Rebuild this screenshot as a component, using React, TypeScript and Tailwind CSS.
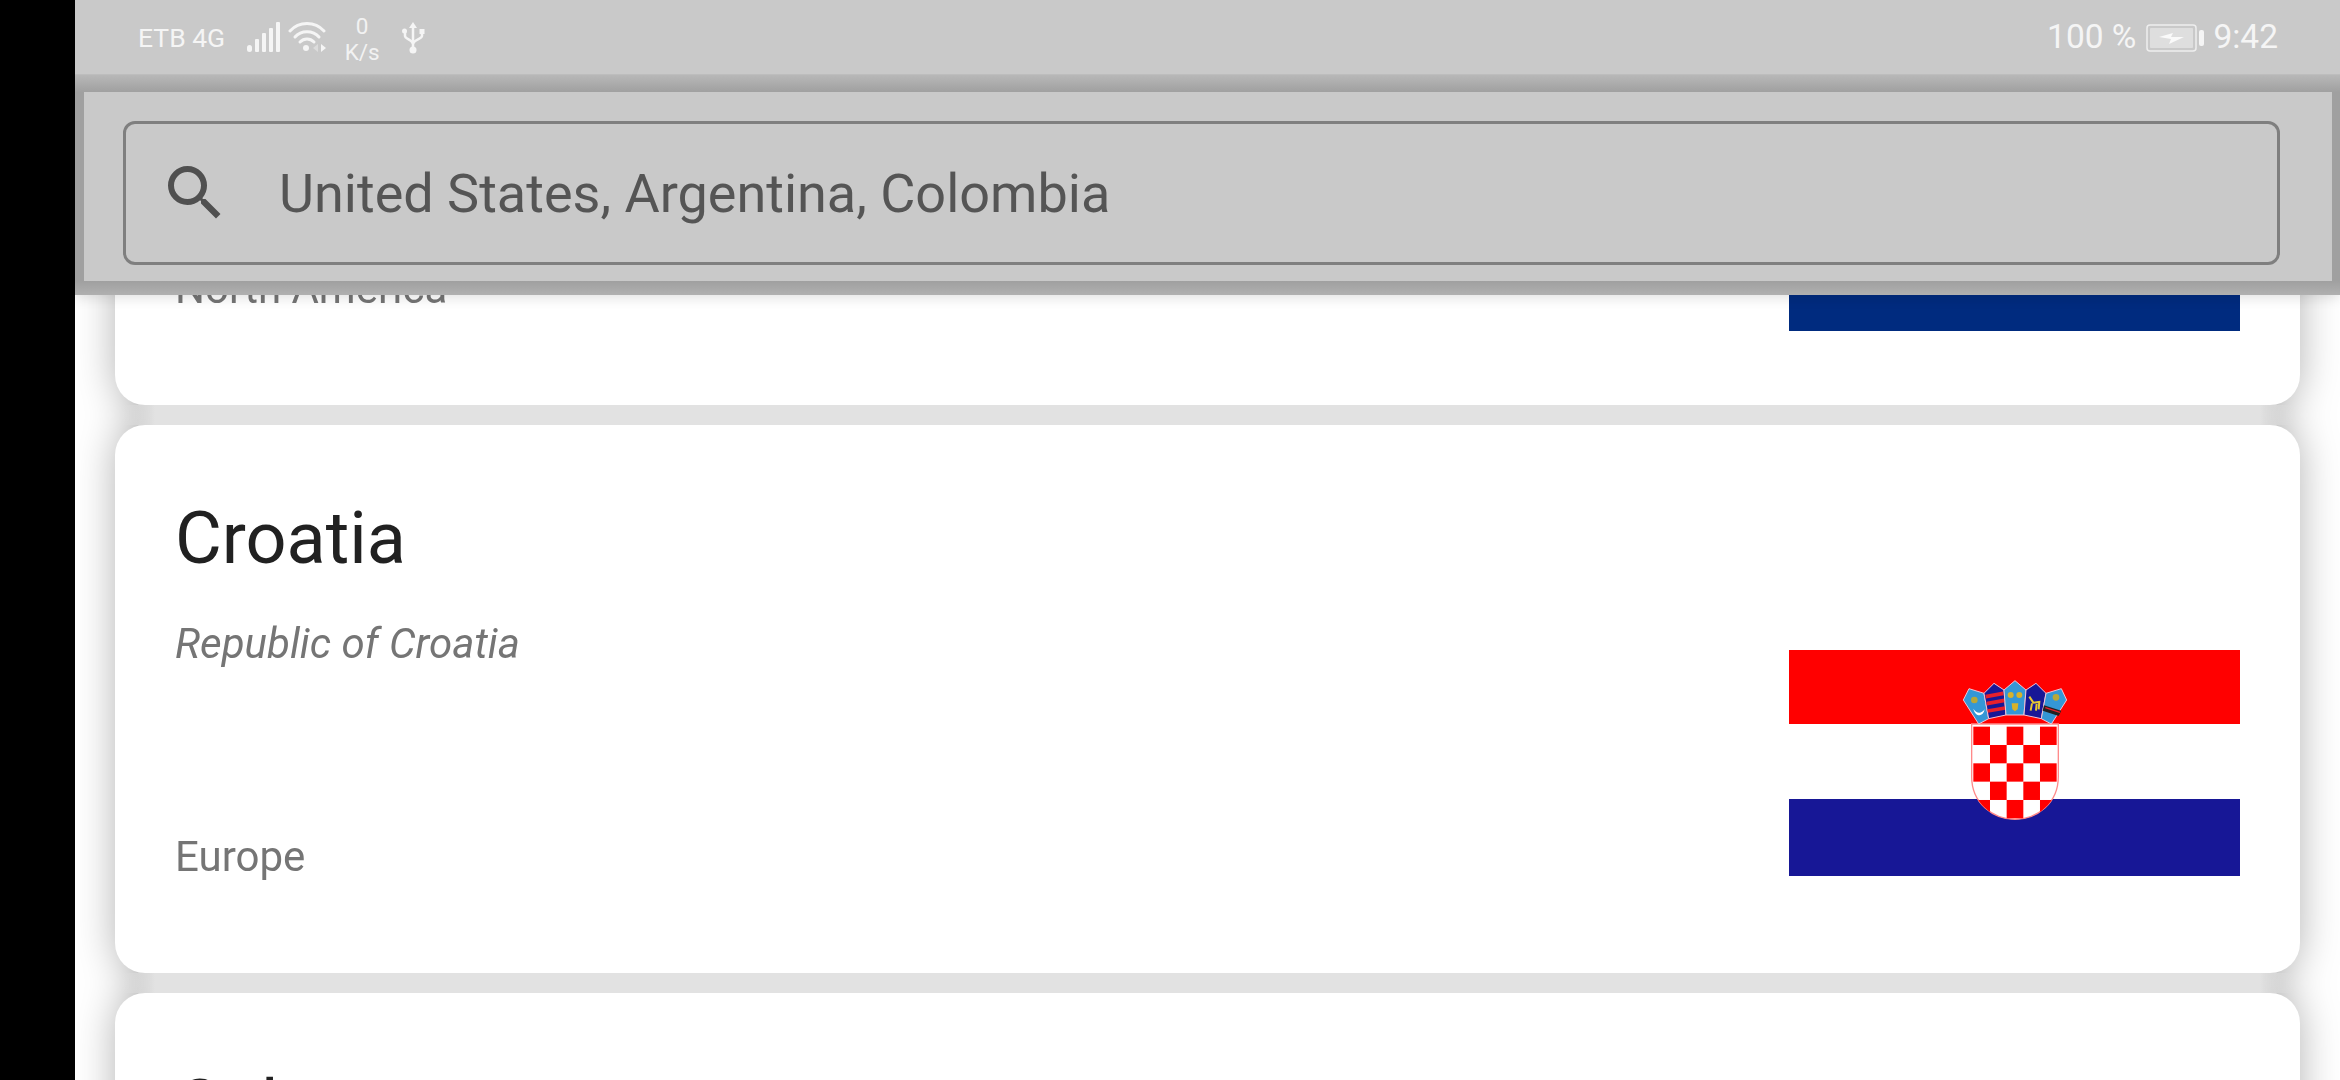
import { Fragment } from "react";
import { MdSearch } from "react-icons/md";

type Country = {
  name: string;
  official: string;
  region: string;
  flag: "costa-rica" | "croatia" | "cuba";
};

const countries: Country[] = [
  { name: "Costa Rica", official: "Republic of Costa Rica", region: "North America", flag: "costa-rica" },
  { name: "Croatia", official: "Republic of Croatia", region: "Europe", flag: "croatia" },
  { name: "Cuba", official: "Republic of Cuba", region: "North America", flag: "cuba" },
];

const checks = [
  [0, 0], [2, 0], [4, 0],
  [1, 1], [3, 1],
  [0, 2], [2, 2], [4, 2],
  [1, 3], [3, 3],
  [0, 4], [2, 4], [4, 4],
];

const shieldPath = "M155 252 L415 252 L415 410 C415 490 350 538 285 538 C220 538 155 490 155 410 Z";

// Coordinates of the crest are in 3x units, scaled down by the group transform.
function CroatiaFlag() {
  return (
    <svg viewBox="0 0 451 226" className="block w-[451px] h-[226px]">
      <rect width="451" height="74" fill="#ff0000" />
      <rect y="74" width="451" height="76" fill="#ffffff" />
      <rect y="149" width="451" height="77" fill="#171796" />
      <g transform="translate(131 -10) scale(0.3333)">
        <clipPath id="shield">
          <path d={shieldPath} />
        </clipPath>
        <path d={shieldPath} fill="#fff" stroke="#ff8a8a" strokeWidth="4" />
        <g clipPath="url(#shield)">
          {checks.map(([c, r]) => (
            <rect key={`${c}-${r}`} x={160 + c * 50} y={260 + r * 55} width="50" height="55" fill="#ff0000" />
          ))}
        </g>
        <path d="M130 180 L147 146 L192 160 L206 236 L176 252 Z" fill="#3497d6" stroke="#f2c4d4" strokeWidth="3" />
        <path d="M192 160 L222 130 L252 150 L258 225 L206 236 Z" fill="#171796" stroke="#f2c4d4" strokeWidth="3" />
        <path d="M197 170 L250 160 M200 191 L254 181 M203 213 L256 204" stroke="#e8202a" strokeWidth="11" />
        <path d="M252 150 L285 122 L318 150 L312 225 L258 225 Z" fill="#3497d6" stroke="#f2c4d4" strokeWidth="3" />
        <circle cx="272" cy="165" r="9" fill="#d8b22a" />
        <circle cx="298" cy="165" r="9" fill="#d8b22a" />
        <path d="M275 190 L295 190 L293 208 L285 214 L277 208 Z" fill="#d8b22a" />
        <path d="M318 150 L348 130 L378 160 L364 236 L312 225 Z" fill="#171796" stroke="#f2c4d4" strokeWidth="3" />
        <path d="M328 170 L340 188 L358 186 L356 208 M336 190 L332 212 M350 192 L348 212" stroke="#e8c832" strokeWidth="6" fill="none" />
        <path d="M378 160 L424 146 L440 180 L394 252 L364 236 Z" fill="#3497d6" stroke="#f2c4d4" strokeWidth="3" />
        <circle cx="408" cy="172" r="10" fill="#b8a838" />
        <path d="M372 196 L424 212 L416 228 L368 212 Z" fill="#222" />
        <path d="M376 203 L420 217" stroke="#e8202a" strokeWidth="4" />
        <path d="M160 206 C170 222 184 222 194 208 C190 232 166 232 160 206 Z" fill="#fff" />
        <circle cx="163" cy="180" r="10" fill="#b8a838" />
      </g>
    </svg>
  );
}

function CostaRicaFlag() {
  return (
    <div className="flex flex-col w-[451px] h-[271px]">
      <div className="h-[45px] bg-[#002b7f]" />
      <div className="h-[45px] bg-white" />
      <div className="h-[91px] bg-[#ce1126]" />
      <div className="h-[45px] bg-white" />
      <div className="h-[45px] bg-[#002b7f]" />
    </div>
  );
}

function CubaFlag() {
  return (
    <div className="flex flex-col w-[451px] h-[226px]">
      <div className="flex-1 bg-[#002a8f]" />
      <div className="flex-1 bg-white" />
      <div className="flex-1 bg-[#002a8f]" />
      <div className="flex-1 bg-white" />
      <div className="flex-1 bg-[#002a8f]" />
    </div>
  );
}

function Flag({ kind }: { kind: Country["flag"] }) {
  if (kind === "croatia") return <CroatiaFlag />;
  if (kind === "costa-rica") return <CostaRicaFlag />;
  return <CubaFlag />;
}

function CountryCard({ country }: { country: Country }) {
  return (
    <article className="flex flex-col h-[548px] shrink-0 rounded-[30px] bg-white pl-[60px] pr-[60px] pt-[61px]">
      <h2 className="h-[105px] text-[72px] leading-[105px] text-[#212121]">{country.name}</h2>
      <div className="flex h-[344px] items-center justify-between">
        <div className="flex h-full flex-col pt-[29px]">
          <p className="text-[42px] leading-[48px] italic text-[#757575]">{country.official}</p>
          <p className="mt-[165px] text-[42px] leading-[48px] text-[#757575]">{country.region}</p>
        </div>
        <Flag kind={country.flag} />
      </div>
    </article>
  );
}

function StatusIcons() {
  return (
    <>
      <svg viewBox="0 0 34 32" className="ml-[22px] w-[34px] h-[32px]" fill="#f5f5f5">
        <rect x="0" y="23" width="5" height="7" rx="2.5" />
        <rect x="8" y="17" width="4" height="13" rx="1" />
        <rect x="15" y="11" width="4" height="19" rx="1" />
        <rect x="22" y="6" width="4" height="24" rx="1" />
        <rect x="29" y="0" width="4" height="30" rx="1" />
      </svg>
      <svg viewBox="0 0 40 34" className="ml-[7px] w-[40px] h-[34px]" fill="none" stroke="#f5f5f5" strokeLinecap="round">
        <path d="M2 10 C11 0 27 0 36 10" strokeWidth="3" />
        <path d="M7 16 C13 9 25 9 31 16" strokeWidth="3" />
        <path d="M12 21 C16 17 22 17 26 21" strokeWidth="3" />
        <circle cx="18" cy="27" r="3" fill="#f5f5f5" stroke="none" />
        <path d="M30 23 L30 31 L25 27 Z" fill="#dcdcdc" stroke="none" />
        <path d="M33 23 L33 31 L38 27 Z" fill="#f5f5f5" stroke="none" />
      </svg>
      <div className="ml-[16px] mt-[3px] flex w-[36px] flex-col items-center text-[22.5px] leading-[26px] text-[#f2f2f2]">
        <span>0</span>
        <span>K/s</span>
      </div>
      <svg viewBox="0 0 24 34" className="ml-[21px] w-[24px] h-[34px]" fill="none" stroke="#f5f5f5" strokeWidth="2.5">
        <path d="M12 4 L12 28" />
        <path d="M12 1 L16 7 L8 7 Z" fill="#f5f5f5" stroke="none" />
        <path d="M4 11 L4 15 C4 18 12 19 12 23" />
        <path d="M21 11 L21 15 C21 18 12 19 12 23" />
        <circle cx="3.5" cy="10" r="2.5" fill="#f5f5f5" stroke="none" />
        <rect x="18.5" y="8" width="5" height="5" fill="#f5f5f5" stroke="none" />
        <circle cx="12" cy="29" r="3.5" fill="#f5f5f5" stroke="none" />
      </svg>
    </>
  );
}

function Battery() {
  return (
    <svg viewBox="0 0 58 28" className="ml-[10px] w-[58px] h-[28px]">
      <rect x="1" y="1" width="49" height="26" rx="3" fill="none" stroke="#eeeeee" strokeWidth="1.5" />
      <rect x="4" y="4" width="43" height="20" rx="1" fill="#dedede" />
      <rect x="53" y="6" width="5" height="16" rx="2" fill="#f5f5f5" />
      <path d="M13 13 L27 9 L25 13 L38 13 L23 20 L25 15 Z" fill="#fafafa" />
    </svg>
  );
}

function Header() {
  return (
    <header className="absolute inset-x-0 top-0 z-10 shadow-[0_3px_12px_rgba(0,0,0,0.12)]">
      <div className="flex h-[75px] items-center justify-between border-b border-[#bdbdbd] bg-[#c9c9c9] pl-[63px] pr-[62px] text-[#f5f5f5]">
        <div className="flex items-center pt-[1px]">
          <span className="text-[26.5px]">ETB 4G</span>
          <StatusIcons />
        </div>
        <div className="flex items-center pt-[1px] text-[33.5px]">
          <span>100 %</span>
          <Battery />
          <span className="ml-[9px]">9:42</span>
        </div>
      </div>
      <div className="bg-[linear-gradient(to_bottom,#b8b8b8_0px,#a0a0a0_17px,#a0a0a0_206px,#b0b0b0_220px)] pt-[17px] pb-[14px] pl-[9px] pr-[8px]">
        <div className="h-[189px] bg-[#c9c9c9] pl-[39px] pr-[52px] pt-[29px]">
          <div className="flex h-[144px] items-center rounded-[12px] border-[3px] border-[#7f7f7f] pl-[33px]">
            <MdSearch className="w-[72px] h-[72px] text-[#505050]" />
            <span className="ml-[48px] text-[54px] text-[#555555]">United States, Argentina, Colombia</span>
          </div>
        </div>
      </div>
    </header>
  );
}

export default function App() {
  return (
    <div className="flex h-[1080px] w-[2340px] overflow-hidden bg-black font-['Roboto',sans-serif]">
      <aside className="w-[75px] shrink-0 bg-black" />
      <main className="relative flex-1 overflow-hidden bg-white">
        <Header />
        <div className="-mt-[143px] flex flex-col px-[40px] drop-shadow-[0_0_20px_rgba(0,0,0,0.3)]">
          {countries.map((c, i) => (
            <Fragment key={c.name}>
              {i > 0 && (
                <div className="mx-[8px] h-[20px] shrink-0 bg-[linear-gradient(to_right,transparent,#e2e2e2_32px,#e2e2e2_calc(100%-32px),transparent)]" />
              )}
              <CountryCard country={c} />
            </Fragment>
          ))}
        </div>
      </main>
    </div>
  );
}
